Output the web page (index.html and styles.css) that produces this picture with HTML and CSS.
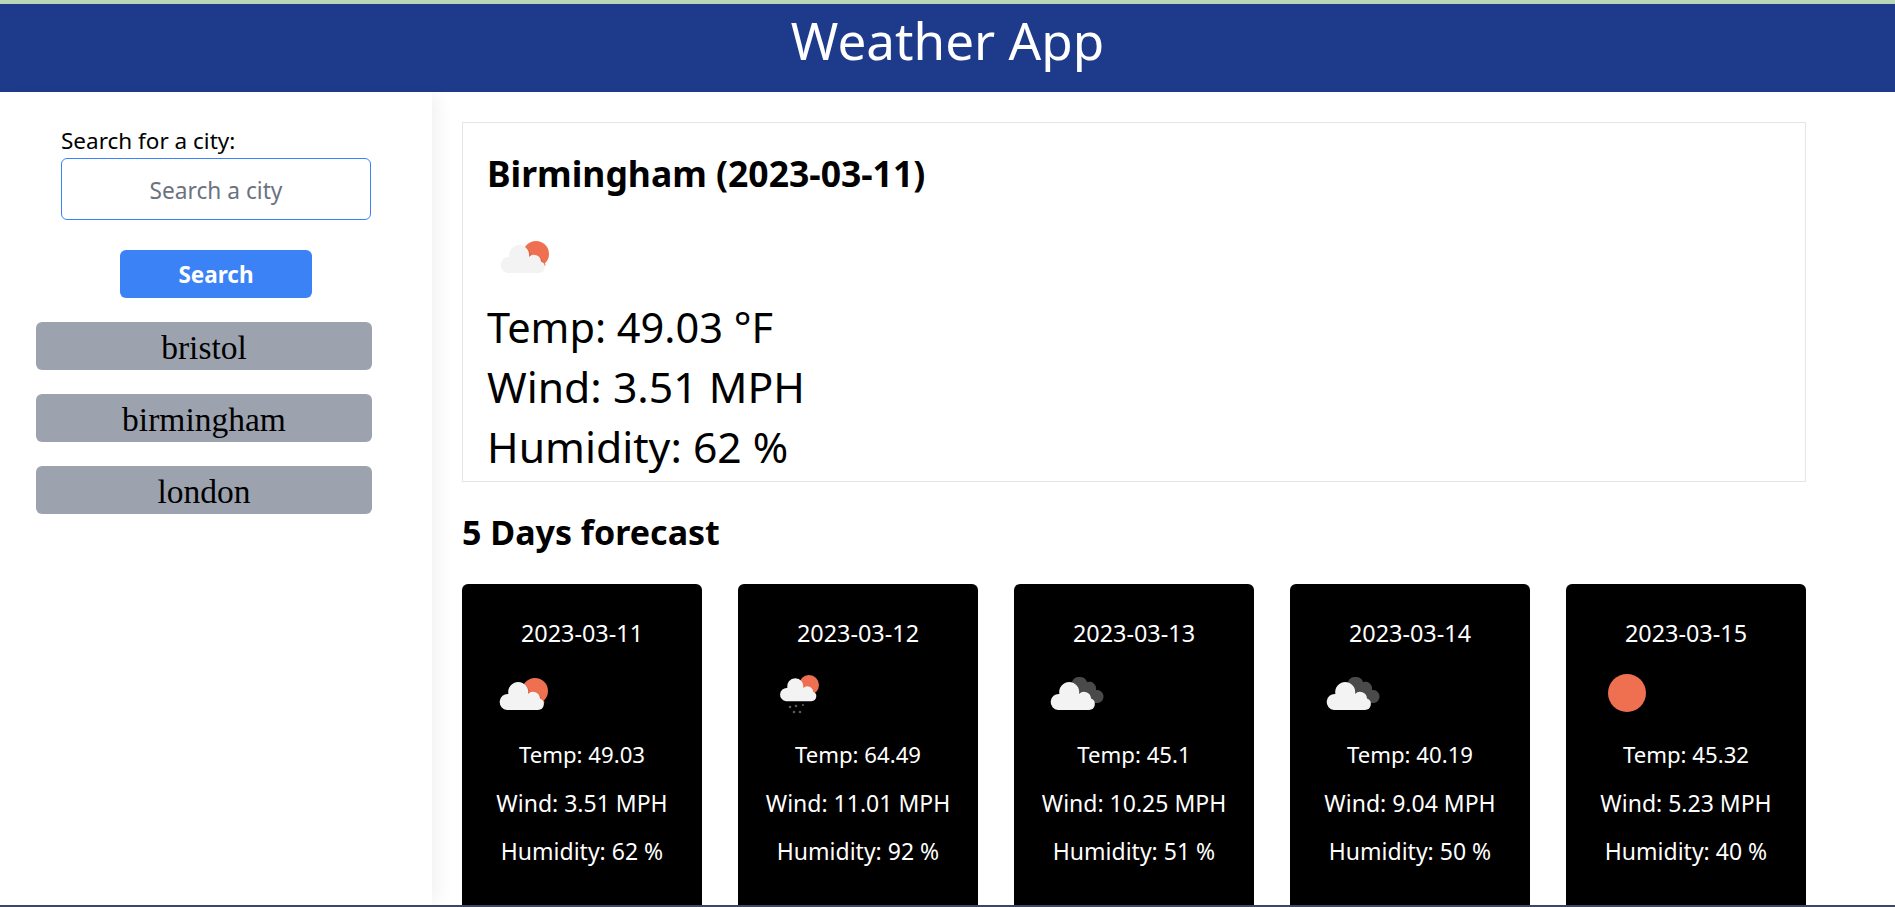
FILE: index.html
```html
<!DOCTYPE html>
<html lang="en">
<head>
    <meta charset="UTF-8">
    <meta name="viewport" content="width=device-width, initial-scale=1.0">
    <title>Weather App</title>
    <link rel="stylesheet" href="styles.css">
</head>
<body>
    <svg class="icon-defs" width="0" height="0">
        <defs>
            <clipPath id="sunClip"><circle cx="47" cy="41" r="13"/></clipPath>
            <path id="cloud" d="M19 60H50A6 6 0 0 0 52 48.4A7 7 0 0 0 40 44A10 10 0 1 0 20.4 44A8 8 0 0 0 19 60Z"/>
            <symbol id="fewClouds" viewBox="0 0 80 80">
                <circle cx="47" cy="41" r="13" fill="#ee7050"/>
                <use href="#cloud" x="1.5" y="1" fill="#d95f3f" clip-path="url(#sunClip)"/>
                <use href="#cloud" fill="#f3f3f3"/>
            </symbol>
            <symbol id="rain" viewBox="0 0 80 80">
                <circle cx="45" cy="35" r="10" fill="#ee7050"/>
                <use href="#cloud" transform="translate(6.500 2) scale(.82)" fill="#f3f3f3"/>
                <g fill="#5a5a5a">
                    <circle cx="26" cy="57" r="1.3"/>
                    <circle cx="32" cy="56" r="1.3"/>
                    <circle cx="39" cy="55" r="1.1"/>
                    <circle cx="30" cy="62" r="1.3"/>
                    <circle cx="36" cy="62" r="1.3"/>
                </g>
            </symbol>
            <symbol id="brokenClouds" viewBox="0 0 80 80">
                <path d="M40 27A7.500 7.500 0 0 1 47 32A7 7 0 0 1 56 40A6.500 6.500 0 0 1 58 53H40L32 32A7.500 7.500 0 0 1 40 27Z" fill="#4a4a4a"/>
                <use href="#cloud" x="-1" fill="#f3f3f3"/>
            </symbol>
            <symbol id="clearSky" viewBox="0 0 80 80">
                <circle cx="35" cy="43" r="19" fill="#ee7050"/>
            </symbol>
        </defs>
    </svg>

    <div class="page">
        <div class="top-strip"></div>
        <header class="app-header">
            <h1>Weather App</h1>
        </header>

        <div class="content">
            <aside class="sidebar">
                <form class="search-form">
                    <label for="city">Search for a city:</label>
                    <input type="text" id="city" placeholder="Search a city">
                    <button type="button" class="search-btn">Search</button>
                </form>
                <div class="history">
                    <button type="button" class="history-btn">bristol</button>
                    <button type="button" class="history-btn">birmingham</button>
                    <button type="button" class="history-btn">london</button>
                </div>
            </aside>

            <main class="main">
                <section class="current">
                    <h2>Birmingham (2023-03-11)</h2>
                    <svg class="current-icon"><use href="#fewClouds"/></svg>
                    <p class="temp">Temp: 49.03 °F</p>
                    <p>Wind: 3.51 MPH</p>
                    <p>Humidity: 62 %</p>
                </section>

                <h2 class="forecast-title">5 Days forecast</h2>
                <section class="forecast">
                    <div class="card">
                        <p class="card-date">2023-03-11</p>
                        <svg class="card-icon"><use href="#fewClouds"/></svg>
                        <p class="temp">Temp: 49.03</p>
                        <p>Wind: 3.51 MPH</p>
                        <p>Humidity: 62 %</p>
                    </div>
                    <div class="card">
                        <p class="card-date">2023-03-12</p>
                        <svg class="card-icon"><use href="#rain"/></svg>
                        <p class="temp">Temp: 64.49</p>
                        <p>Wind: 11.01 MPH</p>
                        <p>Humidity: 92 %</p>
                    </div>
                    <div class="card">
                        <p class="card-date">2023-03-13</p>
                        <svg class="card-icon"><use href="#brokenClouds"/></svg>
                        <p class="temp">Temp: 45.1</p>
                        <p>Wind: 10.25 MPH</p>
                        <p>Humidity: 51 %</p>
                    </div>
                    <div class="card">
                        <p class="card-date">2023-03-14</p>
                        <svg class="card-icon"><use href="#brokenClouds"/></svg>
                        <p class="temp">Temp: 40.19</p>
                        <p>Wind: 9.04 MPH</p>
                        <p>Humidity: 50 %</p>
                    </div>
                    <div class="card">
                        <p class="card-date">2023-03-15</p>
                        <svg class="card-icon"><use href="#clearSky"/></svg>
                        <p class="temp">Temp: 45.32</p>
                        <p>Wind: 5.23 MPH</p>
                        <p>Humidity: 40 %</p>
                    </div>
                </section>
            </main>
        </div>

        <div class="bottom-strip"></div>
    </div>
</body>
</html>
```

FILE: styles.css
```css
* {
    box-sizing: border-box;
}
body {
    font-family: "Noto Sans", Arial, sans-serif;
    margin: 0;
    background-color: #fff;
    color: #000;
}
p, h1, h2 {
    margin: 0;
}
.icon-defs {
    display: block;
    height: 0;
}
.page {
    display: flex;
    flex-direction: column;
    height: 100vh;
    overflow: hidden;
}
.top-strip {
    height: 4px;
    background-color: #b7d7b8;
}
.bottom-strip {
    height: 2px;
    background-color: #3c4a60;
    position: relative;
}
.app-header {
    height: 88px;
    background-color: #1e3a8a;
    text-align: center;
}
.app-header h1 {
    color: #fff;
    font-size: 51.2px;
    font-weight: 400;
    line-height: 72px;
}
.content {
    display: flex;
    flex: 1;
    min-height: 0;
}
.sidebar {
    width: 432px;
    flex-shrink: 0;
    padding: 35px 60px 0 36px;
    box-shadow: 10px 0 15px -3px rgba(0, 0, 0, 0.05);
}
.search-form {
    display: flex;
    flex-direction: column;
    padding: 0 1px 0 25px;
}
.search-form label {
    font-size: 22.5px;
    line-height: 28px;
    margin-bottom: 3px;
}
.search-form input {
    height: 62px;
    width: 310px;
    padding-top: 3px;
    border: 1px solid #3b82f6;
    border-radius: 6px;
    font-family: inherit;
    font-size: 22.7px;
    text-align: center;
}
.search-form input::placeholder {
    color: #6b7280;
}
.search-btn {
    align-self: center;
    width: 192px;
    height: 48px;
    margin-top: 30px;
    padding-top: 2px;
    background-color: #3b82f6;
    color: #fff;
    border: none;
    border-radius: 6px;
    font-family: inherit;
    font-size: 22.5px;
    font-weight: 700;
}
.history {
    display: flex;
    flex-direction: column;
    gap: 24px;
    margin-top: 24px;
}
.history-btn {
    height: 48px;
    padding-top: 4px;
    background-color: #9ca3af;
    color: #000;
    border: none;
    border-radius: 6px;
    font-family: "Liberation Serif", serif;
    font-size: 33.5px;
}
.main {
    flex: 1;
    min-width: 0;
    padding: 30px 89px 0 30px;
}
.current {
    height: 360px;
    padding: 30px 24px 0;
    border: 1px solid #e5e5e5;
}
.current h2 {
    font-size: 35.5px;
    font-weight: 700;
    line-height: 40px;
}
.forecast-title {
    font-size: 34px;
    font-weight: 700;
    line-height: 40px;
}
.current-icon {
    display: block;
    width: 80px;
    height: 80px;
    margin: 20px 0 4px 2px;
}
.current p {
    font-size: 42.7px;
    line-height: 60px;
}
.current .temp {
    font-size: 41.5px;
}
.forecast-title {
    margin: 30px 0 32px;
}
.forecast {
    display: grid;
    grid-template-columns: repeat(5, 1fr);
    gap: 36px;
}
.card {
    height: 350px;
    padding-top: 35px;
    background-color: #000;
    color: #fff;
    border-radius: 6px;
    text-align: center;
}
.card p {
    font-size: 23px;
    line-height: 28px;
    margin-bottom: 20px;
}
.card .card-date {
    font-size: 23.4px;
    margin-bottom: 3px;
}
.card .temp {
    font-size: 22.2px;
}
.card-icon {
    display: block;
    width: 80px;
    height: 80px;
    margin: 0 0 11px 26px;
}
```
